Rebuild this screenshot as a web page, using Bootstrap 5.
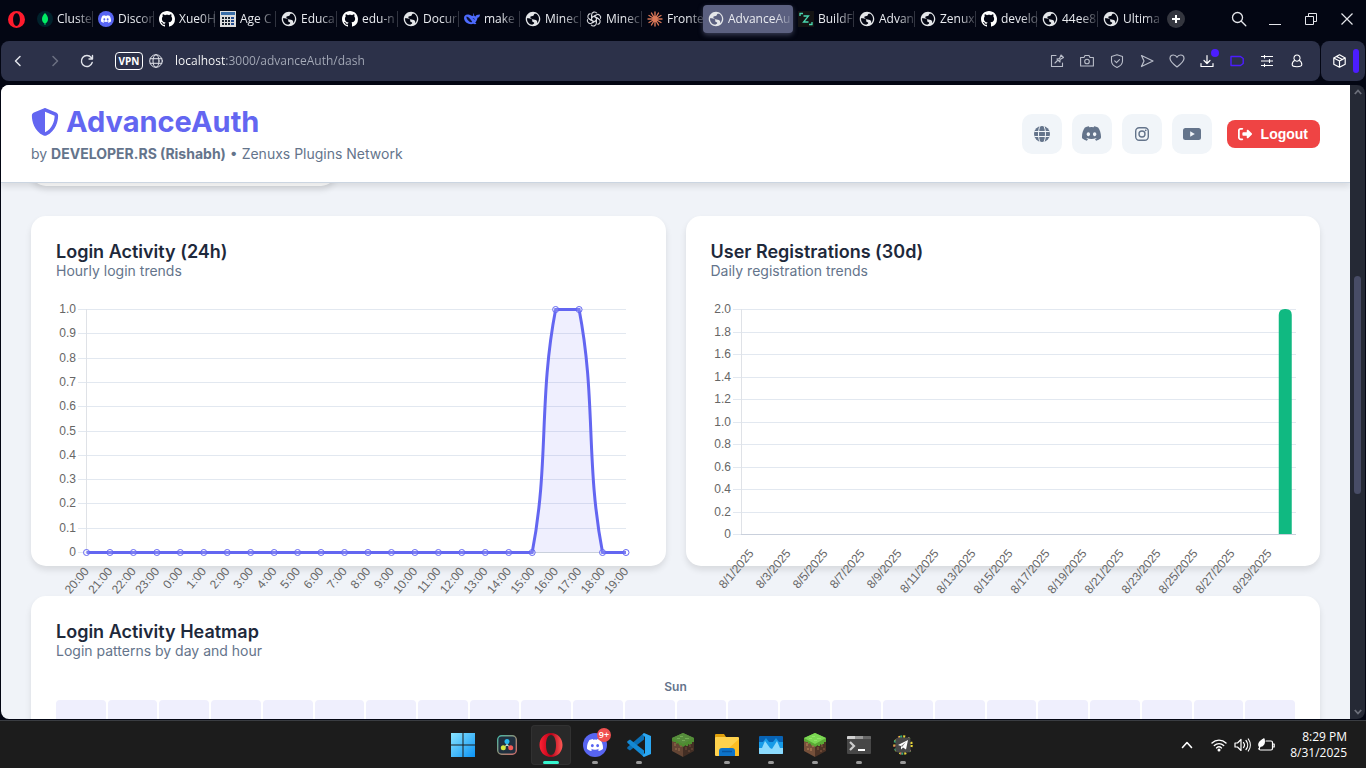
<!DOCTYPE html>
<html lang="en">
<head>
<meta charset="utf-8">
<meta name="viewport" content="width=device-width, initial-scale=1">
<title>AdvanceAuth</title>
<link href="https://cdn.jsdelivr.net/npm/bootstrap@5.3.0/dist/css/bootstrap.min.css" rel="stylesheet">
<style>
  body { background: #030613; font-family: "Open Sans", "Noto Sans", sans-serif; font-size: 12px; }
  svg { display: block; flex: none; }
  .ln { fill: none; stroke: currentColor; stroke-linecap: round; stroke-linejoin: round; }
  button { color: inherit; background: none; border: 0; padding: 0; }

  /* Browser tabs */
  .tabstrip { height: 41px; padding: 4px 1px 7px 1px; }
  .opera-menu { width: 31px; }
  .tab-item { width: 61px; flex: none; color: #e9ebf0; line-height: 16px; padding: 0 0 0 5px; gap: 4px; position: relative; text-decoration: none; }
  .tab-item span { white-space: nowrap; -webkit-mask-image: linear-gradient(90deg, #000 55%, #0003 100%); mask-image: linear-gradient(90deg, #000 55%, #0003 100%); }
  .tab-item.ruled { border-right: 1px solid #30333f; }
  .tab-item.current { width: 90px; height: 28px; border-radius: 4px; background: #5b6080; box-shadow: 0 2px 5px #5b608099; }
  .tab-item.current span { -webkit-mask-image: linear-gradient(90deg, #000 75%, #0003 100%); mask-image: linear-gradient(90deg, #000 75%, #0003 100%); }
  .new-tab { width: 18px; height: 18px; border-radius: 9px; background: #34363f; color: #fff; margin-left: 8px; }
  .win-btn { width: 36px; height: 30px; color: #e4e5ea; }

  /* Address bar */
  .toolbar { height: 40px; margin: 0 1px 4px; gap: 1px; color: #e1e3ea; }
  .tool-panel { background: #2c3149; border-radius: 8px; }
  .nav-btn { width: 34px; height: 30px; }
  .nav-btn.forward { width: 40px; }
  .nav-btn.reload { width: 24px; }
  .tool-btn { width: 30px; height: 30px; position: relative; color: #b9bdc9; }
  .tool-btn.lit { color: #fff; }
  .tool-btn.saver { color: #4c1dff; }
  .notice { position: absolute; right: 3px; top: 3px; width: 8px; height: 8px; border-radius: 4px; background: #4c1dff; }
  .vpn { height: 18px; width: 28px; border: 1px solid #fff; border-radius: 4px; font-size: 10px; line-height: 16px; font-weight: 700; text-align: center; color: #fff; }
  .site-info { margin: 0 12px 0 6px; }
  .url-box { border: 0; padding: 0; font-size: 12px; line-height: 18px; outline: 0; color: transparent; background: linear-gradient(90deg, #fff 51px, #a6abb9 51px); -webkit-background-clip: text; background-clip: text; }
  .side-panel { width: 44px; padding-right: 6px; }
  .purple-bar { width: 6px; height: 24px; border-radius: 3px; background: #4c1dff; }

  /* Page */
  .page-view { background: #f0f3f8; border-radius: 8px 0 0 8px; overflow: hidden; font-family: Inter, sans-serif; color: #1e293b; }
  .view-row { margin: 0 1px 1px; min-height: 0; }
  .site-head { background: #fff; padding: 0 30px; height: 98px; border-bottom: 1px solid #cbd5e1; box-shadow: 0 4px 6px #00000018; position: relative; z-index: 2; flex: none; }
  .brand-name { font-size: 29px; line-height: 34px; font-weight: 700; color: #6366f1; margin: 0; gap: 7px; }
  .byline { font-size: 14px; line-height: 18px; color: #64748b; margin: 6px 0 0; }
  .social-row { gap: 10px; }
  .social { width: 40px; height: 40px; border-radius: 10px; background: #f1f5f9; color: #64748b; }
  .logout { height: 28px; border-radius: 8px; background: #ef4444; color: #fff; font: 700 14px "Liberation Sans", sans-serif; padding: 0 12px 0 11px; gap: 9px; margin-left: 5px; }
  .page-body { padding: 0 30px; }
  .panel { background: #fff; border-radius: 15px; box-shadow: 0 4px 6px #0000001a; padding: 25px; min-width: 0; }
  .stat-card { width: 305px; height: 40px; padding: 0; margin-top: -37px; margin-bottom: 30px; }
  .chart-row { display: grid; grid-template-columns: 1fr 1fr; gap: 20px; margin-bottom: 30px; }
  .chart-panel { height: 350px; }
  .panel h2 { font-size: 18px; line-height: 21px; font-weight: 600; margin: 0; }
  .panel p { font-size: 14px; line-height: 17px; color: #64748b; margin: 0 0 21px; }
  .plot { height: 300px; }
  .plot svg { overflow: visible; }
  .plot text { font: 12px "Liberation Sans", sans-serif; fill: #666; }
  .day-name { font-size: 12px; line-height: 14px; font-weight: 600; color: #64748b; margin-bottom: 6px; }
  .heat { display: grid; grid-template-columns: repeat(24, 1fr); gap: 2px; }
  .heat div { height: 50px; border-radius: 4px; background: #efeffd; }
  .scroll-rail { width: 15px; background: #252935; color: #6c6f7a; padding: 4px 0; border-radius: 0 8px 8px 0; }
  .scroll-grip { width: 7px; flex: 217; border-radius: 4px; background: #484c66; }
  .rail-above { flex: 180; }
  .rail-below { flex: 214; }

  /* Taskbar */
  .taskbar { height: 48px; background: #1c1c1c; border-top: 1px solid #3a3d42; display: grid; grid-template-columns: 1fr auto 1fr; color: #fff; flex: none; }
  .task { width: 44px; height: 47px; position: relative; }
  .task.active { background: #292929; box-shadow: inset 0 0 0 1px #313131; border-radius: 4px; width: 40px; height: 40px; margin: 0 2px; }
  .task.running::after { content: ""; position: absolute; bottom: 4px; width: 6px; height: 3px; border-radius: 2px; background: #999; }
  .task.active::after { content: ""; position: absolute; bottom: 1px; width: 16px; height: 3px; border-radius: 2px; background: #35f5cf; }
  .count { position: absolute; left: 24px; top: 7px; width: 14px; height: 14px; border-radius: 7px; background: #f05050; font-size: 9px; line-height: 13px; font-weight: 600; text-align: center; }
  .tray { gap: 7px; padding-right: 19px; }
  .tray-more { margin-right: 11px; }
  .clock { font-size: 12px; line-height: 16px; width: 65px; text-align: right; white-space: nowrap; }
</style>
</head>
<body class="d-flex flex-column vh-100 overflow-hidden">

<svg width="0" height="0" class="position-absolute" aria-hidden="true">
  <symbol id="i-globe-tab" viewBox="1 1 22 22"><path fill="#e4e6e9" d="M12 2C6.480 2 2 6.480 2 12s4.480 10 10 10 10-4.480 10-10S17.520 2 12 2zm-1 18c-3.950-.4-7.200-3.800-7.200-8l.2-1.500c2 1 5 .5 6.500 2 1.300 1.400-.3 2 .6 3 .9.900 3 .7 2.500 2.500-.3 1-1.600 1.300-2.600 2zm6.900-2.600c-.4-1 .2-2-.6-3-1.500-1.900-4-1-6-1.900-1.800-.8-3.600-2-2.800-3.500.8-1.400 2.600-.6 4-1.500.9-.6.500-2 1.700-2.600 1-.5 2-.2 2.800.3 2 1.500 3.200 4 3.200 6.300 0 2.300-.9 4.400-2.300 5.900z"/></symbol>
  <symbol id="i-github" viewBox="0 0 16 16"><path fill="#fff" d="M8 0C3.580 0 0 3.580 0 8c0 3.540 2.290 6.530 5.470 7.590.4.070.55-.17.55-.38 0-.19-.01-.82-.01-1.490-2.010.37-2.530-.49-2.690-.94-.09-.23-.48-.94-.82-1.130-.28-.15-.68-.52-.01-.53.63-.01 1.080.58 1.230.82.72 1.210 1.870.87 2.330.66.07-.52.28-.87.51-1.070-1.780-.2-3.640-.89-3.640-3.950 0-.87.31-1.590.82-2.150-.08-.2-.36-1.020.08-2.120 0 0 .67-.21 2.200.82.64-.18 1.320-.27 2-.27s1.360.09 2 .27c1.530-1.040 2.200-.82 2.200-.82.44 1.100.16 1.920.08 2.120.51.56.82 1.270.82 2.150 0 3.070-1.870 3.750-3.650 3.950.29.25.54.73.54 1.480 0 1.070-.01 1.930-.01 2.200 0 .21.15.46.55.38A8.010 8.010 0 0 0 16 8c0-4.420-3.580-8-8-8"/></symbol>
  <symbol id="i-discord" viewBox="0 0 16 16"><path fill="currentColor" d="M13.545 2.907a13.200 13.200 0 0 0-3.257-1.011.05.05 0 0 0-.052.025c-.141.25-.297.577-.406.833a12.200 12.200 0 0 0-3.658 0 8 8 0 0 0-.412-.833.05.05 0 0 0-.052-.025c-1.125.194-2.220.534-3.257 1.011a.04.04 0 0 0-.021.018C.356 6.024-.213 9.047.066 12.032q.003.022.021.037a13.300 13.300 0 0 0 3.995 2.020.05.05 0 0 0 .056-.019q.463-.63.818-1.329a.05.05 0 0 0-.01-.059l-.018-.011a9 9 0 0 1-1.248-.595.05.05 0 0 1-.02-.066l.015-.019q.127-.095.248-.195a.05.05 0 0 1 .051-.007c2.619 1.196 5.454 1.196 8.041 0a.05.05 0 0 1 .053.007q.121.1.248.195a.05.05 0 0 1-.004.085 8 8 0 0 1-1.249.594.05.05 0 0 0-.03.03.05.05 0 0 0 .003.041c.24.465.515.909.817 1.329a.05.05 0 0 0 .056.019 13.200 13.200 0 0 0 4.001-2.020.05.05 0 0 0 .021-.037c.334-3.451-.559-6.449-2.366-9.106a.03.03 0 0 0-.02-.019m-8.198 7.307c-.789 0-1.438-.724-1.438-1.612s.637-1.613 1.438-1.613c.807 0 1.450.73 1.438 1.613 0 .888-.637 1.612-1.438 1.612m5.316 0c-.788 0-1.438-.724-1.438-1.612s.637-1.613 1.438-1.613c.807 0 1.451.73 1.438 1.613 0 .888-.631 1.612-1.438 1.612"/></symbol>
  <symbol id="i-grass" viewBox="0 0 22 24"><path d="M0 6 11 11v13L0 18z" fill="#76503a"/><path d="M22 6 11 11v13l11-6z" fill="#4d3326"/><path d="M2 10h2v3H2zm4 5h2v3H6zm2-3h2v2H8zM3 15h2v2H3z" fill="#9a6c4c"/><path d="M13 14h2v3h-2zm4-3h2v3h-2zm-1 6h2v2h-2zm3-2h2v2h-2z" fill="#6d4835"/><path d="M11 0 22 5v4l-2 0v2h-2v1l-2-1v2h-2v-1l-3 2-2-2-1 1-2-3-2 1V9L2 9 0 8V5z" fill="#5aaa35"/><path d="M11 0 22 5 11 11 0 5z" fill="var(--top, #7bd753)"/><path d="M8 3h3v1H8zm5 2h4v1h-4zM5 5h3v1H5zm5 2h3v1h-3z" fill="#a1ec76" opacity=".6"/></symbol>
</svg>

<nav class="tabstrip d-flex align-items-center flex-shrink-0" aria-label="Browser tabs">
  <button class="opera-menu d-flex justify-content-center" aria-label="Opera menu"><svg width="17" height="17" viewBox="0 0 16 16"><path fill="#ff1b2d" fill-rule="evenodd" d="M8 0a8 8 0 1 0 0 16A8 8 0 0 0 8 0M8 2c2 0 3.200 2.500 3.200 6S10 14 8 14 4.800 11.500 4.800 8 6 2 8 2"/></svg></button>
  <a href="#" class="tab-item ruled d-flex align-items-center"><svg width="16" height="16" viewBox="0 0 16 16"><circle cx="8" cy="8" r="8" fill="#00222c"/><path d="M8 2c2 2 3 4 3 6s-1 3.500-2.600 4.600V14h-.8v-1.400C6 11.500 5 10 5 8s1-4 3-6" fill="#00ed64"/></svg><span>Cluste</span></a>
  <a href="#" class="tab-item ruled d-flex align-items-center"><svg width="16" height="16" viewBox="0 0 16 16"><circle cx="8" cy="8" r="8" fill="#5865f2"/><use href="#i-discord" x="3" y="3" width="10" height="10" color="#fff"/></svg><span>Discor</span></a>
  <a href="#" class="tab-item ruled d-flex align-items-center"><svg width="16" height="16"><use href="#i-github"/></svg><span>Xue0H</span></a>
  <a href="#" class="tab-item ruled d-flex align-items-center"><svg width="16" height="16" viewBox="0 0 16 16"><path fill="#ddd" d="M0 0h16v16H0z"/><path fill="#3a6ea8" d="M1 1h14v3H1z"/><path d="M2 6h2v2H2zm3 0h2v2H5zm3 0h2v2H8zM2 9h2v2H2zm3 0h2v2H5zm3 0h2v2H8zm-6 3h2v2H2zm3 0h2v2H5zm3 0h2v2H8z" fill="#17202c"/><path d="M11 6h3v2h-3zm0 3h3v2h-3zm0 3h3v2h-3z" fill="#264e91"/></svg><span>Age C</span></a>
  <a href="#" class="tab-item ruled d-flex align-items-center"><svg width="16" height="16"><use href="#i-globe-tab"/></svg><span>Educa</span></a>
  <a href="#" class="tab-item ruled d-flex align-items-center"><svg width="16" height="16"><use href="#i-github"/></svg><span>edu-n</span></a>
  <a href="#" class="tab-item ruled d-flex align-items-center"><svg width="16" height="16"><use href="#i-globe-tab"/></svg><span>Docur</span></a>
  <a href="#" class="tab-item ruled d-flex align-items-center"><svg width="16" height="16" viewBox="0 0 16 16"><path fill="#4d6bfe" d="M9.500 2c0 2 .8 3 2 3.500.3-1.300 1.500-2 4.500-2-.2 2.200-1 3-2.500 3.200-.3 2.200-1.200 3.700-2.300 4.800l1.300 1.300c-1 .7-2.400.5-3.200 0-3.800 1.200-8.500-.8-9.200-5C-.3 5 1.500 3.200 4.500 3.600c1.200.1 2 .6 3 1.200l2 .2C8.800 4 8.900 3 9.500 2"/><path d="M2.500 5.500c2 .2 4 2.500 5.500 5 .7 1.200-2 .8-3-.3C3.500 9 2 7 2.500 5.500M8.500 7c1.200 0 2.300.8 2.200 2" fill="#0c1230"/></svg><span>make</span></a>
  <a href="#" class="tab-item ruled d-flex align-items-center"><svg width="16" height="16"><use href="#i-globe-tab"/></svg><span>Minec</span></a>
  <a href="#" class="tab-item ruled d-flex align-items-center"><svg width="16" height="16" viewBox="-8 -8 16 16"><g fill="none" stroke="#d9dbe0" stroke-width="1.100"><path id="petal" d="M-2.400 1.400V-4.100a2.900 2.900 0 0 1 5.300-1.600M-2.400-1.400 2.300-4.100"/><use href="#petal" transform="rotate(60)"/><use href="#petal" transform="rotate(120)"/><use href="#petal" transform="rotate(180)"/><use href="#petal" transform="rotate(240)"/><use href="#petal" transform="rotate(300)"/></g></svg><span>Minec</span></a>
  <a href="#" class="tab-item d-flex align-items-center"><svg width="16" height="16" viewBox="0 0 16 16"><path stroke="#d97757" stroke-width="1.400" stroke-linecap="round" d="M8 8V1M8 8l3.500-6M8 8l6-3.500M8 8h7M8 8l6 3.500M8 8l3.500 6M8 8v7M8 8l-3.500 6M8 8l-6 3.500M8 8H1M8 8 2 4.500M8 8 4.500 2"/></svg><span>Fronte</span></a>
  <a href="#" class="tab-item current d-flex align-items-center" aria-current="page"><svg width="16" height="16"><use href="#i-globe-tab"/></svg><span>AdvanceAu</span></a>
  <a href="#" class="tab-item ruled d-flex align-items-center"><svg width="16" height="16" viewBox="0 0 16 16"><path d="M0 0h16v16H0z" fill="#141414"/><path d="M2 5V2.500h3M14 11v2.500h-3M5.500 5h5l-5 6h5" fill="none" stroke="#4ad8b0" stroke-width="1.300"/></svg><span>BuildF</span></a>
  <a href="#" class="tab-item ruled d-flex align-items-center"><svg width="16" height="16"><use href="#i-globe-tab"/></svg><span>Advan</span></a>
  <a href="#" class="tab-item ruled d-flex align-items-center"><svg width="16" height="16"><use href="#i-globe-tab"/></svg><span>Zenux</span></a>
  <a href="#" class="tab-item ruled d-flex align-items-center"><svg width="16" height="16"><use href="#i-github"/></svg><span>develo</span></a>
  <a href="#" class="tab-item ruled d-flex align-items-center"><svg width="16" height="16"><use href="#i-globe-tab"/></svg><span>44ee8</span></a>
  <a href="#" class="tab-item d-flex align-items-center"><svg width="16" height="16"><use href="#i-globe-tab"/></svg><span>Ultima</span></a>
  <button class="new-tab d-flex align-items-center justify-content-center" aria-label="New tab"><svg width="8" height="8" viewBox="0 0 8 8"><path d="M4 0v8M0 4h8" stroke="currentColor" stroke-width="2"/></svg></button>
  <div class="d-flex ms-auto">
    <button class="win-btn d-flex align-items-center justify-content-center" aria-label="Search tabs"><svg width="16" height="16" viewBox="0 0 16 16" class="ln" stroke-width="1.300"><circle cx="6.500" cy="6.500" r="5"/><path d="m10.300 10.300 4.500 4.500"/></svg></button>
    <button class="win-btn d-flex align-items-center justify-content-center" aria-label="Minimize"><svg width="12" height="12" viewBox="0 0 12 12"><path d="M0 11.500h12" stroke="currentColor"/></svg></button>
    <button class="win-btn d-flex align-items-center justify-content-center" aria-label="Restore"><svg width="12" height="12" viewBox="0 0 12 12" fill="none" stroke="currentColor"><path d="M.5 3.500h8v8h-8zM3.500 3.500v-3h8v8h-3"/></svg></button>
    <button class="win-btn d-flex align-items-center justify-content-center" aria-label="Close"><svg width="12" height="12" viewBox="0 0 12 12"><path d="m.5.5 11 11m0-11-11 11" stroke="currentColor" stroke-width="1.200"/></svg></button>
  </div>
</nav>

<div class="toolbar d-flex flex-shrink-0">
  <div class="tool-panel d-flex align-items-center flex-grow-1">
    <button class="nav-btn d-flex align-items-center justify-content-center" aria-label="Back"><svg width="12" height="12" viewBox="0 0 12 12" class="ln" stroke-width="1.500"><path d="M8 1.500 3.500 6 8 10.500"/></svg></button>
    <button class="nav-btn forward d-flex align-items-center justify-content-center" aria-label="Forward"><svg width="12" height="12" viewBox="0 0 12 12" class="ln" stroke-width="1.500" opacity=".35"><path d="M4 1.500 8.500 6 4 10.500"/></svg></button>
    <button class="nav-btn reload d-flex align-items-center justify-content-center me-3" aria-label="Reload"><svg width="14" height="14" viewBox="0 0 14 14" class="ln" stroke-width="1.400"><path d="M12.200 8.500a5.500 5.500 0 1 1-1-5L12.500 5M12.500 1.500V5H9"/></svg></button>
    <button class="vpn">VPN</button>
    <svg width="14" height="14" viewBox="0 0 14 14" class="ln site-info" stroke-width="1"><circle cx="7" cy="7" r="6.300"/><ellipse cx="7" cy="7" rx="3" ry="6.300"/><path d="M1.200 4.700h11.600M1.200 9.300h11.600"/></svg>
    <input class="url-box flex-grow-1" type="text" aria-label="Address" value="localhost:3000/advanceAuth/dash">
    <div class="d-flex pe-2">
      <button class="tool-btn d-flex align-items-center justify-content-center" aria-label="Pin"><svg width="14" height="14" viewBox="0 0 14 14" class="ln" stroke-width="1.100"><path d="M6 1.500H1.500v11h11V9M5 9l3-3M7 5l3 3M7 5l2.500-.5L11 1l2.500 2.500L10 5.500 10 8"/></svg></button>
      <button class="tool-btn d-flex align-items-center justify-content-center" aria-label="Snapshot"><svg width="14" height="14" viewBox="0 0 14 14" class="ln" stroke-width="1.100"><path d="M.6 3.500H4L5 1.500h4l1 2h3.400v8.500H.6z"/><circle cx="7" cy="7.500" r="2.300"/></svg></button>
      <button class="tool-btn d-flex align-items-center justify-content-center" aria-label="Ad blocker"><svg width="14" height="14" viewBox="0 0 14 14" class="ln" stroke-width="1.100"><path d="M7 .8 12.500 2.500V7c0 3-2 5-5.500 6.400C3.500 12 1.500 10 1.500 7V2.500zM4.700 6.800l1.800 1.800 3-3"/></svg></button>
      <button class="tool-btn d-flex align-items-center justify-content-center" aria-label="Send"><svg width="14" height="14" viewBox="0 0 14 14" class="ln" stroke-width="1.200"><path d="M1.500 1.500 13 7 1.500 12.500 4 7z"/></svg></button>
      <button class="tool-btn d-flex align-items-center justify-content-center" aria-label="Bookmark"><svg width="16" height="16" viewBox="0 0 16 16" class="ln" stroke-width="1.200"><path d="M8 14C3.500 10.500 1 8.300 1 5.500 1 3.300 2.500 2 4.400 2 6 2 7.300 3 8 4.300 8.700 3 10 2 11.600 2 13.500 2 15 3.300 15 5.500c0 2.800-2.500 5-7 8.500z"/></svg></button>
      <button class="tool-btn lit d-flex align-items-center justify-content-center" aria-label="Downloads"><svg width="14" height="14" viewBox="0 0 14 14" class="ln" stroke-width="1.200"><path d="M7 1.500V9M4 6.500l3 3 3-3M1 9.500v3h12v-3"/></svg><i class="notice"></i></button>
      <button class="tool-btn saver d-flex align-items-center justify-content-center" aria-label="Battery saver"><svg width="14" height="12" viewBox="0 0 14 12" class="ln" stroke-width="1.400"><path d="M1 1.500h9.500l2.700 2v5l-2.700 2H1z"/></svg></button>
      <button class="tool-btn lit d-flex align-items-center justify-content-center" aria-label="Easy setup"><svg width="12" height="12" viewBox="0 0 12 12" class="ln" stroke-width="1.100"><path d="M0 1.500h12M0 6h12M0 10.500h12M3.500 0v3M8.500 4.500v3M3.500 9v3"/></svg></button>
      <button class="tool-btn lit d-flex align-items-center justify-content-center" aria-label="Profile"><svg width="12" height="14" viewBox="0 0 12 14" class="ln" stroke-width="1.100"><path d="M6 1a3 3 0 0 1 2 5.300c1.500.7 2.800 2.700 2.800 4.200 0 1.800-1.300 2.200-4.800 2.200s-4.800-.4-4.800-2.200c0-1.500 1.300-3.500 2.800-4.200A3 3 0 0 1 6 1M4 6.300c1 .9 3 .9 4 0"/></svg></button>
    </div>
  </div>
  <div class="tool-panel side-panel d-flex align-items-center">
    <button class="tool-btn lit d-flex align-items-center justify-content-center flex-grow-1 ps-1" aria-label="Extensions"><svg width="13" height="14" viewBox="0 0 13 14" class="ln" stroke-width="1.200"><path d="M6.500.8 12.200 4v6.200l-5.700 3-5.700-3V4zM.8 4l5.700 3 5.700-3M6.500 7v6M3.500 2.500l6 3"/></svg></button>
    <i class="purple-bar"></i>
  </div>
</div>

<div class="view-row d-flex flex-grow-1">
  <div class="page-view flex-grow-1 d-flex flex-column">
    <header class="site-head d-flex align-items-center justify-content-between">
      <div>
        <h1 class="brand-name d-flex align-items-center"><svg width="28" height="28" viewBox="0 0 512 512"><path fill="currentColor" d="M256 0c4.600 0 9.200 1 13.400 2.900L457.700 82.800c22 9.300 38.400 31 38.300 57.200c-.5 99.200-41.300 280.700-213.600 363.200c-16.700 8-36.100 8-52.800 0C57.300 420.700 16.500 239.200 16 140c-.1-26.200 16.300-47.900 38.300-57.200L242.700 2.900C246.800 1 251.400 0 256 0zm0 66.800V444.800C394 378 431.100 230.100 432 141.400L256 66.800z"/></svg>AdvanceAuth</h1>
        <p class="byline">by <strong>DEVELOPER.RS (Rishabh)</strong> • Zenuxs Plugins Network</p>
      </div>
      <div class="social-row d-flex align-items-center">
        <a href="#" class="social d-flex align-items-center justify-content-center" aria-label="Website"><svg width="16" height="16" viewBox="0 0 16 16"><circle cx="8" cy="8" r="8" fill="currentColor"/><path d="M.3 5.500h15.400M.3 10.500h15.400" stroke="#f1f5f9" fill="none"/><path d="M6 0C4 4 4 12 6 16M10 0c2 4 2 12 0 16" stroke="#f1f5f9" fill="none"/></svg></a>
        <a href="#" class="social d-flex align-items-center justify-content-center" aria-label="Discord"><svg width="19" height="19"><use href="#i-discord"/></svg></a>
        <a href="#" class="social d-flex align-items-center justify-content-center" aria-label="Instagram"><svg width="16" height="16" viewBox="0 0 16 16"><rect x="1.700" y="1.700" width="12.600" height="12.600" rx="3.500" fill="none" stroke="currentColor" stroke-width="1.400"/><circle cx="8" cy="8" r="3" fill="none" stroke="currentColor" stroke-width="1.400"/><circle cx="11.700" cy="4.300" r=".9" fill="currentColor"/></svg></a>
        <a href="#" class="social d-flex align-items-center justify-content-center" aria-label="YouTube"><svg width="18" height="12" viewBox="0 0 18 12"><rect width="18" height="12" rx="2.500" fill="currentColor"/><path d="m7.200 3.300 4.600 2.700-4.600 2.700z" fill="#f1f5f9"/></svg></a>
        <button class="logout d-flex align-items-center"><svg width="14" height="14" viewBox="0 0 512 512"><path fill="currentColor" d="M377.900 105.900L500.700 228.700c7.200 7.200 11.300 17.100 11.300 27.300s-4.100 20.100-11.300 27.300L377.900 406.100c-6.400 6.400-15 9.900-24 9.900c-18.700 0-33.900-15.200-33.900-33.900l0-62.100-128 0c-17.700 0-32-14.300-32-32l0-64c0-17.700 14.300-32 32-32l128 0 0-62.100c0-18.700 15.200-33.900 33.900-33.900c9 0 17.600 3.600 24 9.900zM160 96L96 96c-17.700 0-32 14.300-32 32l0 256c0 17.700 14.300 32 32 32l64 0c17.700 0 32 14.300 32 32s-14.300 32-32 32l-64 0c-53 0-96-43-96-96L0 128C0 75 43 32 96 32l64 0c17.700 0 32 14.300 32 32s-14.300 32-32 32z"/></svg>Logout</button>
      </div>
    </header>

    <main class="page-body">
      <div class="panel stat-card"></div>
      <div class="chart-row">
        <section class="panel chart-panel">
          <h2>Login Activity (24h)</h2>
          <p>Hourly login trends</p>
          <div class="plot" id="logins"></div>
        </section>
        <section class="panel chart-panel">
          <h2>User Registrations (30d)</h2>
          <p>Daily registration trends</p>
          <div class="plot" id="signups"></div>
        </section>
      </div>
      <section class="panel">
        <h2>Login Activity Heatmap</h2>
        <p>Login patterns by day and hour</p>
        <div class="day-name text-center">Sun</div>
        <div class="heat" id="heat"></div>
      </section>
    </main>
  </div>
  <div class="scroll-rail d-flex flex-column align-items-center">
    <svg width="8" height="6" viewBox="0 0 8 6"><path d="m.8 5 3.200-3.500L7.200 5" fill="none" stroke="currentColor" stroke-width="1.800"/></svg>
    <div class="rail-above"></div><div class="scroll-grip"></div><div class="rail-below"></div>
    <svg width="8" height="6" viewBox="0 0 8 6"><path d="m.8 1 3.200 3.500L7.200 1" fill="none" stroke="currentColor" stroke-width="1.800"/></svg>
  </div>
</div>

<footer class="taskbar align-items-center">
  <div></div>
  <div class="d-flex align-items-center">
    <button class="task d-flex align-items-center justify-content-center" aria-label="Start"><svg width="24" height="24" viewBox="0 0 24 24"><defs><linearGradient id="win" x2="1" y2="1"><stop stop-color="#8ae4ff"/><stop offset="1" stop-color="#0a93f5"/></linearGradient></defs><path fill="url(#win)" d="M0 0h11.500v11.500H0zM12.500 0H24v11.500H12.500zM0 12.500h11.500V24H0zM12.500 12.500H24V24H12.500z"/></svg></button>
    <button class="task d-flex align-items-center justify-content-center" aria-label="DaVinci Resolve"><svg width="20" height="20" viewBox="0 0 20 20"><defs><linearGradient id="dv" x2="1" y2="1"><stop stop-color="#47b8a8"/><stop offset=".5" stop-color="#8e8f77"/><stop offset="1" stop-color="#d06a6a"/></linearGradient></defs><rect x=".7" y=".7" width="18.600" height="18.600" rx="4" fill="#20303f" stroke="url(#dv)" stroke-width="1.400"/><path d="M10 10V7m0 3-3 2m3-2 3 2" stroke="#dfe" stroke-width="1"/><circle cx="10" cy="6.500" r="2.500" fill="#25b9ef"/><circle cx="6.300" cy="12.800" r="2.500" fill="#d5e83d"/><circle cx="13.700" cy="12.800" r="2.500" fill="#f35a55"/></svg></button>
    <button class="task active d-flex align-items-center justify-content-center" aria-label="Opera"><svg width="24" height="24" viewBox="0 0 24 24"><defs><linearGradient id="op" x2="1" y2="0"><stop stop-color="#ff2233"/><stop offset=".5" stop-color="#b70018"/><stop offset="1" stop-color="#ff5a55"/></linearGradient></defs><path fill="url(#op)" fill-rule="evenodd" d="M12 0C5.500 0 .5 5 .5 12S5.500 24 12 24s11.500-5 11.500-12S18.500 0 12 0m0 2c3 0 5 4 5 10s-2 10-5 10-5-4-5-10 2-10 5-10"/></svg></button>
    <button class="task running d-flex align-items-center justify-content-center" aria-label="Discord"><svg width="24" height="24" viewBox="0 0 24 24"><circle cx="12" cy="12" r="12" fill="#5865f2"/><use href="#i-discord" x="4" y="4" width="16" height="16"/></svg><span class="count">9+</span></button>
    <button class="task running d-flex align-items-center justify-content-center" aria-label="VS Code"><svg width="24" height="24" viewBox="0 0 24 24"><path fill="#0b6fb5" d="M17 0v6.500L3 17.500 .3 15.700v-1.500z"/><path fill="#1489d4" d="M17 24v-6.500L3 6.500.3 8.300v1.500z"/><path fill="#2ba7f2" d="m17 0 7 3v18l-7 3-1.500-1.500L18 20V4l-2.500-2.500z"/></svg></button>
    <button class="task d-flex align-items-center justify-content-center" aria-label="Minecraft Launcher"><svg width="22" height="24" opacity=".8" style="--top:#65a844"><use href="#i-grass"/></svg></button>
    <button class="task running d-flex align-items-center justify-content-center" aria-label="File Explorer"><svg width="24" height="22" viewBox="0 0 24 22"><path fill="#e0a00b" d="M0 1q0-1 1-1h8l2 3v5H0z"/><rect y="3" width="24" height="19" rx="1" fill="#ffd24d"/><path d="M24 5v16q0 1-1 1H5z" fill="#fdbd22"/><path fill="#0d73c9" d="M4 22v-5q0-3 3-3h10q3 0 3 3v5z"/><path d="M7 17.500h10" stroke="#0755a0" stroke-width="1.500"/></svg></button>
    <button class="task running d-flex align-items-center justify-content-center" aria-label="Resource Monitor"><svg width="24" height="18" viewBox="0 0 24 18"><rect width="24" height="18" rx="1" fill="#0863b5"/><path fill="#169be8" d="M0 6h4l3-4 3 4h4l3-4 3 4h4v12H0z"/><path fill="#8bdafd" d="M0 12h3l3-7 5 7 2 1 5-8 3 7h3v5q0 1-1 1H1q-1 0-1-1z"/></svg></button>
    <button class="task running d-flex align-items-center justify-content-center" aria-label="Minecraft"><svg width="22" height="24"><use href="#i-grass"/></svg></button>
    <button class="task running d-flex align-items-center justify-content-center" aria-label="Terminal"><svg width="24" height="18" viewBox="0 0 24 18"><rect width="24" height="18" rx="1" fill="#474747"/><path fill="#d0d0d0" d="M0 3V1q0-1 1-1h7v3z"/><path fill="#999" d="M8 0h8v3H8z"/><path fill="#666" d="M16 0h7q1 0 1 1v2h-8z"/><path d="m3 6 4 4-4 4" fill="none" stroke="#ccc" stroke-width="2.200"/><path d="M11 14h7" stroke="#fff" stroke-width="2"/></svg></button>
    <button class="task running d-flex align-items-center justify-content-center" aria-label="Share"><svg width="20" height="20" viewBox="0 0 20 20"><circle cx="10" cy="10" r="8.500" fill="none" stroke="#e9d638" stroke-width="2.500" stroke-dasharray="2 3"/><circle cx="10" cy="10" r="8.500" fill="none" stroke="#39a879" stroke-width="2.500" stroke-dasharray="2 6" stroke-dashoffset="3"/><circle cx="10" cy="10" r="8.500" fill="none" stroke="#d65270" stroke-width="2" stroke-dasharray="1 9" stroke-dashoffset="5"/><rect x="2.500" y="2.500" width="15" height="15" rx="3" fill="#474747"/><path fill="#fff" d="m15 5-10 5 3 1v3.500l2-2 3 2z"/><path d="m8 11 5-4-4 5z" fill="#777"/></svg></button>
  </div>
  <div class="tray d-flex align-items-center justify-content-end">
    <svg width="12" height="8" viewBox="0 0 12 8" class="ln tray-more" stroke-width="1.600"><path d="m1.500 6.500 4.500-5 4.500 5"/></svg>
    <svg width="16" height="14" viewBox="0 0 16 14" class="ln" stroke-width="1.400"><path d="M1 5a10 10 0 0 1 14 0M3.300 7.500a6.800 6.800 0 0 1 9.400 0M5.500 9.900a3.700 3.700 0 0 1 5 0"/><circle cx="8" cy="12" r=".8" fill="#fff"/></svg>
    <svg width="17" height="14" viewBox="0 0 17 14" class="ln" stroke-width="1.200"><path d="M1 5h2.500L7 1.500v11L3.500 9H1zM9.500 4.500a4 4 0 0 1 0 5M12 2.500a7 7 0 0 1 0 9M14.300 1a10 10 0 0 1 0 12"/></svg>
    <svg width="17" height="14" viewBox="0 0 17 14" class="ln" stroke-width="1.200"><path d="M8 3h5q1.500 0 1.500 1.500v6Q14.500 12 13 12H2.500Q1 12 1 10.500M14.800 6h1.400v3h-1.400"/><path d="M1 8C0 4 3 3 6 .8 7 5 6 8 2 8.500L1 11" fill="#fff"/></svg>
    <div class="clock">8:29 PM<br>8/31/2025</div>
  </div>
</footer>

<script src="https://cdn.jsdelivr.net/npm/bootstrap@5.3.0/dist/js/bootstrap.bundle.min.js"></script>
<script>
  const INDIGO = '#6366f1', GRID = '#e2e8f0';

  // Axes shared by both charts: horizontal grid, left spine and value labels
  function axes(box, left, right, top, bottom, max, steps) {
    let s = '';
    for (let i = 0; i <= steps; i++) {
      const y = Math.round(bottom - (bottom - top) * i / steps) + .5;
      const label = i ? (max * i / steps).toFixed(1) : '0';
      s += `<path d="M${left - 8} ${y}H${right}" stroke="${GRID}"/><text x="${left - 10}" y="${y + 3.5}" text-anchor="end">${label}</text>`;
    }
    return s + `<path d="M${left + .5} ${top}V${bottom}" stroke="#dfe2e7"/><path d="M${left} ${bottom + .5}H${right}" stroke="#c9d0dc"/>`;
  }
  const tickText = (x, y, t) => `<text transform="translate(${x} ${y}) rotate(-50)" text-anchor="end" dominant-baseline="central">${t}</text>`;
  const svg = (w, inner) => `<svg width="${w}" height="300">${inner}</svg>`;

  function lineChart(box, labels, values) {
    const w = box.clientWidth, L = 30, R = w - 15, T = 9, B = 252;
    const p = values.map((v, i) => [L + .5 + (R - L - .5) * i / (values.length - 1), B + .5 - (B - T) * v]);
    const clamp = y => Math.min(B + .5, Math.max(T + .5, y));
    const cps = p.map((c, i) => {
      const a = p[i - 1] || c, b = p[i + 1] || c;
      const d0 = Math.hypot(c[0] - a[0], c[1] - a[1]), d1 = Math.hypot(b[0] - c[0], b[1] - c[1]);
      const f0 = .4 * d0 / (d0 + d1), f1 = .4 * d1 / (d0 + d1);
      return [[c[0] - f0 * (b[0] - a[0]), clamp(c[1] - f0 * (b[1] - a[1]))], [c[0] + f1 * (b[0] - a[0]), clamp(c[1] + f1 * (b[1] - a[1]))]];
    });
    let d = `M${p[0]}`;
    for (let i = 1; i < p.length; i++) d += `C${cps[i - 1][1]} ${cps[i][0]} ${p[i]}`;
    let s = axes(box, L, R, T, B, 1, 10);
    s += `<path d="${d}L${R} ${B}L${L} ${B}Z" fill="${INDIGO}" fill-opacity=".1"/><path d="${d}" fill="none" stroke="${INDIGO}" stroke-width="3"/>`;
    p.forEach((c, i) => s += `<circle cx="${c[0]}" cy="${c[1]}" r="3" fill="#fff" fill-opacity=".15" stroke="${INDIGO}"/>` + tickText(c[0], B + 17, labels[i]));
    box.innerHTML = svg(w, s);
  }

  function barChart(box, labels, values, max) {
    const w = box.clientWidth, L = 30, R = w, T = 9, B = 234, step = (R - L) / values.length;
    let s = axes(box, L, R, T, B, max, 10);
    values.forEach((v, i) => {
      const x = L + step * (i + .5), y = B - (B - T) * v / max;
      if (v) s += `<path d="M${x - 8} ${B}V${y + 6}q0-6 6-6h1q6 0 6 6V${B}z" fill="#10b981"/>`;
      if (i % 2 === 0) s += tickText(x + 1, B + 17, labels[i]);
    });
    box.innerHTML = svg(w, s);
  }

  const hours = Array.from({ length: 24 }, (_, i) => (i + 20) % 24 + ':00');
  const days = Array.from({ length: 30 }, (_, i) => `8/${i + 1}/2025`);
  function draw() {
    lineChart(document.getElementById('logins'), hours, hours.map(h => h === '16:00' || h === '17:00' ? 1 : 0));
    barChart(document.getElementById('signups'), days, days.map((_, i) => i === 29 ? 2 : 0), 2);
  }
  document.getElementById('heat').innerHTML = '<div></div>'.repeat(24);
  draw();
  addEventListener('resize', draw);
</script>
</body>
</html>
